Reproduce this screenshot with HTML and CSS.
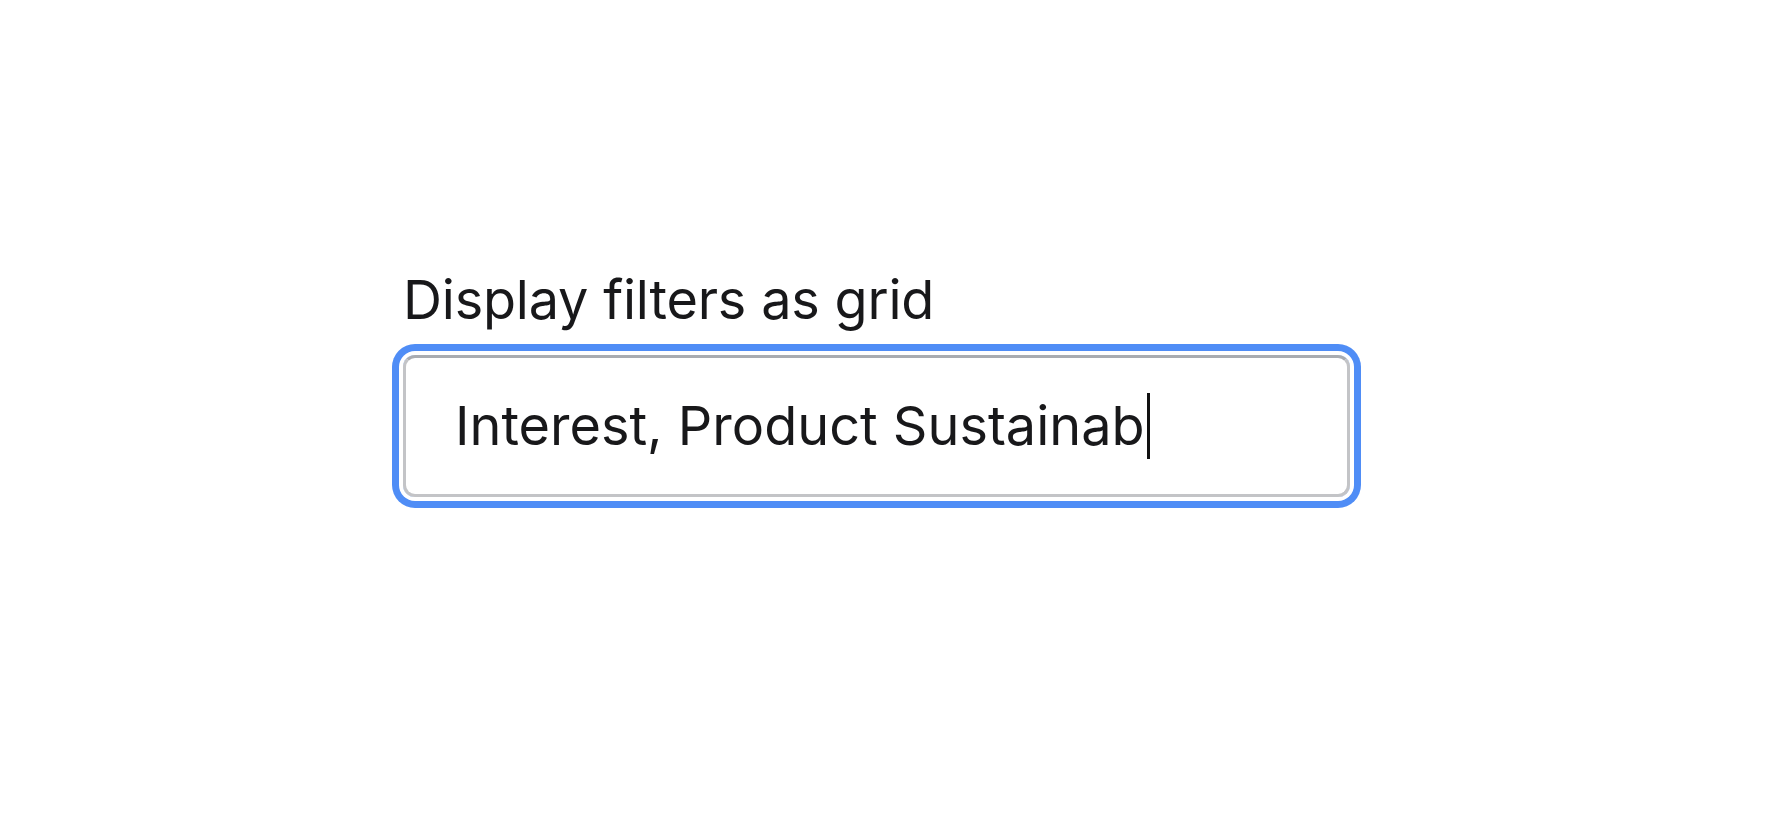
FILE: index.html
```html
<!DOCTYPE html>
<html lang="en">
<head>
    <meta charset="UTF-8" />
    <title>Display filters as grid</title>
    <link rel="stylesheet" href="styles.css">
</head>
<body>
    <div class="page">
        <div class="field">
            <label class="field-label" for="gridFilters">Display filters as grid</label>
            <div class="field-input is-focused" id="gridFilters">
                <span class="field-value">Interest, Product Sustainab</span><span class="caret"></span>
            </div>
        </div>
    </div>
</body>
</html>
```

FILE: styles.css
```css
* { box-sizing: border-box; }

html, body { height: 100%; }

body {
    margin: 0;
    background: #ffffff;
    color: #18181a;
    font-family: Inter, "Noto Sans", sans-serif;
}

.page {
    min-height: 100%;
    padding: 267px 0 0 403px;
}

.field {
    display: flex;
    flex-direction: column;
    gap: 22px;
    width: 947px;
}

.field-label {
    font-size: 54px;
    line-height: 66px;
    letter-spacing: -0.2px;
}

/* text box, shown in its focused state */
.field-input {
    display: flex;
    align-items: center;
    height: 142px;
    padding-left: 49px;
    border: 3px solid #c3c4c7;
    border-top-color: #a9acb1;
    border-radius: 12px;
    font-size: 54px;
    line-height: 66px;
}
.field-input.is-focused {
    box-shadow: 0 0 0 4px #ffffff, 0 0 0 11px #4f8df6;
}

.caret {
    display: inline-block;
    width: 3px;
    height: 66px;
    margin-left: 2px;
    background: #111111;
}
```
